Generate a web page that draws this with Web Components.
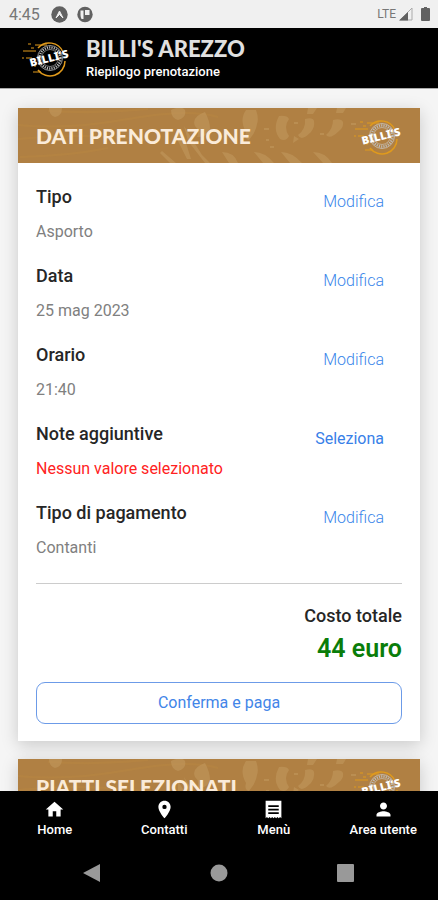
<!DOCTYPE html>
<html lang="it">
<head>
<meta charset="utf-8">
<meta name="viewport" content="width=device-width, initial-scale=1">
<title>Billi's Arezzo - Riepilogo prenotazione</title>
<style>
  html, body {
    margin: 0;
    height: 100%;
    background: #f5f5f5;
    font-family: Roboto, sans-serif;
    color: #262626;
  }
</style>
</head>
<body>
<booking-app></booking-app>

<script>
(() => {
  const define = (name, html, setup) => {
    const template = document.createElement("template");
    template.innerHTML = html;
    customElements.define(name, class extends HTMLElement {
      constructor() {
        super();
        this.attachShadow({ mode: "open" });
        this.shadowRoot.appendChild(template.content.cloneNode(true));
      }
      connectedCallback() {
        if (setup) setup(this, this.shadowRoot);
      }
    });
  };

  define("billis-logo", `
    <style>
      :host { display: block; flex: none; width: 48px; height: 36px; }
      svg { display: block; width: 100%; height: 100%; overflow: visible; }
      text { font-family: "Noto Sans", sans-serif; font-weight: 900; font-size: 11px; fill: #fff; }
    </style>
    <svg viewBox="0 0 48 36" role="img" aria-label="Logo Billi's">
      <g fill="none" stroke="#e09a1c">
        <path d="M16 8A15 15 0 0 1 41 12M43 21A15 15 0 0 1 16 30" stroke-width="1.5"/>
        <path d="M6 4h3M13 5h12M1 11h13M0 18h2M4 18h6M14 26h-2M11 32h8M9 8h3" stroke-width="1.1"/>
      </g>
      <circle cx="28" cy="18" r="10.500" fill="none" stroke="#bbb" stroke-width="2.400" stroke-dasharray="1.200 1.100"/>
      <circle cx="28" cy="18" r="12.500" fill="none" stroke="#ccc" stroke-width=".7"/>
      <circle cx="28" cy="18" r="8.500" fill="none" stroke="#ccc" stroke-width=".6"/>
      <text x="27" y="22" text-anchor="middle" transform="rotate(-14 27 18)">BILLI'S</text>
    </svg>
  `);

  define("status-bar", `
    <style>
      :host {
        display: flex; align-items: center; justify-content: space-between; flex: none;
        height: 28px; padding: 0 8px 0 9px; box-sizing: border-box;
        background: #f0f0f0; color: #777; font-size: 16px;
      }
      div { display: flex; align-items: center; }
      svg { display: block; }
      .left svg { margin-left: 9px; }
      .left span { margin-right: 2px; }
      .right { font-size: 12px; }
      .right svg { margin-left: 3px; }
      .right svg + svg { margin-left: 8px; }
    </style>
    <div class="left">
      <span>4:45</span>
      <svg width="17" height="17" viewBox="0 0 17 17" aria-hidden="true">
        <circle cx="8.500" cy="8.500" r="8.200" fill="#616161"/>
        <path d="M5 12L8.500 5L12 12L8.500 8.500Z" fill="#f0f0f0" stroke="#f0f0f0" stroke-linejoin="round"/>
      </svg>
      <svg width="16" height="17" viewBox="0 0 16 17" aria-hidden="true">
        <circle cx="8" cy="8.500" r="7.700" fill="#616161"/>
        <path d="M3.500 4.500h3V13h-2q-1-2-1-4zM8 4h4.500v5H8z" fill="#f0f0f0"/>
      </svg>
    </div>
    <div class="right">
      <span>LTE</span>
      <svg width="14" height="14" viewBox="0 0 14 14" aria-hidden="true">
        <path d="M13 1V13H1Z" fill="none" stroke="#aaa"/>
        <path d="M9 5V13.500H0Z" fill="#616161"/>
      </svg>
      <svg width="9" height="14" viewBox="0 0 9 14" aria-hidden="true">
        <path d="M3 0h3v1h2q1 0 1 1v11q0 1-1 1H1q-1 0-1-1V2q0-1 1-1h2z" fill="#616161"/>
      </svg>
    </div>
  `);

  define("app-header", `
    <style>
      :host {
        display: flex; align-items: center; flex: none; gap: 16px;
        height: 61px; padding: 0 22px; box-sizing: border-box;
        background: #000; color: #fff; border-bottom: 1px solid #aaa;
      }
      div { padding-top: 4px; }
      ::slotted(h1) { margin: 0; font: 900 22px/24px Lato, sans-serif; color: #e0e0e0; }
      ::slotted(p) { margin: 0; font-size: 13px; line-height: 22px; font-weight: 500; }
    </style>
    <billis-logo></billis-logo>
    <div><slot></slot></div>
  `);

  define("section-card", `
    <style>
      :host { display: block; background: #fff; box-shadow: 0 4px 16px rgba(0, 0, 0, .18); }
      header {
        display: grid; align-items: center; height: 55px;
        background: #b08043; overflow: hidden;
      }
      header > * { grid-area: 1 / 1; }
      .pattern { width: 100%; height: 55px; display: block; }
      .bar { display: flex; align-items: center; justify-content: space-between; padding: 0 18px; }
      .bar ::slotted(h2) { margin: 0; font: 900 21px/24px Lato, sans-serif; color: #faebd9; }
      .body { padding: 22px 18px 17px; }
    </style>
    <header>
      <svg class="pattern" viewBox="0 0 402 55" preserveAspectRatio="xMidYMid slice" aria-hidden="true">
        <g fill="none" stroke="#bd8a43" stroke-width="2" opacity=".35">
          <path d="M0 17Q50 22 110 11T200 9M0 31Q70 24 140 34M2 49Q50 48 90 40M30 3Q80 6 130 1"/>
        </g>
        <g fill="#c39a60" opacity=".55">
          <path d="M31 0h13q0 8-7 9q-6-2-6-9zM153 2q10-5 14 0q2 7-7 10q-7-2-7-10z"/>
          <path d="M187 4q5 9 5 17q-3 9-13 8q3-7-2-11q-4-9 10-14zM228 2h10q3 8 1 14q-1 8-8 16q-5-1-3-8q-7-12 0-22z"/>
          <path d="M261 8q8-1 10 3q-6 8 0 17q-3 6-9 3q-8-10-1-23zM290 0h9l-4 6h-6zM287 11q8-2 9 2q1 6-3 11q-10 10-13 3q8-6 7-16zM319 0h9l-3 5h-7zM315 12q8-2 10 2q1 5-4 9q-9 9-13 4q7-6 7-15z"/>
          <path d="M204 44q12 0 16 11h-9zM236 44q11 0 20 11h-11zM263 44q11 0 21 11h-12zM295 44q12 0 19 11h-9z"/>
          <path d="M160 22l8 13 5 16h-4l-9-18zM166 18l18 29 8 8h-5l-17-22zM144 43l14 12h-6l-10-10z"/>
          <path d="M246 20h5v2h-5zM248 31h3v2h-3zM276 28l5 3-6 4zM302 25h4v2h-4zM333 15h5v2h-5zM252 38h4v2h-4zM276 14h4v2h-4z"/>
        </g>
      </svg>
      <div class="bar"><slot name="title"></slot><billis-logo></billis-logo></div>
    </header>
    <div class="body"><slot></slot></div>
  `);

  define("detail-row", `
    <style>
      :host { display: flex; justify-content: space-between; height: 79px; padding-right: 18px; }
      h3 { margin: 0 0 12px; font-size: 18px; line-height: 24px; font-weight: 500; }
      p { margin: 0; font-size: 16px; line-height: 22px; color: #808080; }
      :host([missing]) p { color: #f22; }
      button {
        align-self: flex-start; margin: 6px 0 0; padding: 0; border: 0; background: none;
        font: 300 16px/22px Roboto, sans-serif; color: #3a86ea; cursor: pointer;
      }
      :host([missing]) button { font-weight: 400; color: #3880e8; }
    </style>
    <div><h3 id="label"></h3><p><slot></slot></p></div>
    <button type="button" aria-describedby="label"></button>
  `, (host, root) => {
    root.querySelector("h3").textContent = host.getAttribute("label");
    root.querySelector("button").textContent = host.getAttribute("action") || "Modifica";
  });

  define("order-total", `
    <style>
      :host { display: block; margin-top: 3px; border-top: 1px solid #ccc; padding-top: 20px; text-align: right; }
      h3 { margin: 0; font-size: 18px; line-height: 24px; font-weight: 500; }
      p { margin: 5px 0 17px; font-size: 25px; line-height: 32px; font-weight: 600; color: #0a7d0a; }
      button {
        display: block; width: 100%; height: 42px; border: 1px solid #6c9be8; border-radius: 9px;
        background: #fff; font: 400 16px/22px Roboto, sans-serif; color: #4285e8; cursor: pointer;
      }
    </style>
    <h3>Costo totale</h3>
    <p><slot></slot></p>
    <button type="button">Conferma e paga</button>
  `);

  const icons = {
    home: "M10 20v-6h4v6h5v-8h3L12 3 2 12h3v8z",
    place: "M12 2C8.130 2 5 5.130 5 9c0 5.250 7 13 7 13s7-7.750 7-13c0-3.870-3.130-7-7-7zm0 9.500a2.500 2.500 0 1 1 0-5 2.500 2.500 0 0 1 0 5z",
    receipt: "M18 17H6v-2h12v2zm0-4H6v-2h12v2zm0-4H6V7h12v2zM3 22l1.500-1.500L6 22l1.500-1.500L9 22l1.500-1.500L12 22l1.500-1.500L15 22l1.500-1.500L18 22l1.500-1.500L21 22V2H3z",
    person: "M12 12c2.210 0 4-1.790 4-4s-1.790-4-4-4-4 1.790-4 4 1.790 4 4 4zm0 2c-2.670 0-8 1.340-8 4v2h16v-2c0-2.660-5.330-4-8-4z"
  };

  define("tab-link", `
    <style>
      :host { display: block; }
      a {
        display: flex; flex-direction: column; align-items: center;
        color: #fff; text-decoration: none; font-size: 13px; line-height: 20px; font-weight: 500;
      }
      svg { width: 21px; height: 21px; fill: currentColor; }
    </style>
    <a href="#"><svg viewBox="0 0 24 24" aria-hidden="true"><path/></svg><slot></slot></a>
  `, (host, root) => {
    root.querySelector("path").setAttribute("d", icons[host.getAttribute("icon")]);
  });

  define("tab-bar", `
    <style>
      :host { display: block; flex: none; background: #000; }
      nav { display: grid; grid-template-columns: repeat(4, 1fr); height: 55px; padding-top: 8px; box-sizing: border-box; }
    </style>
    <nav><slot></slot></nav>
  `);

  define("system-nav", `
    <style>
      :host {
        display: grid; grid-template-columns: repeat(3, 1fr); flex: none;
        height: 54px; padding: 0 29px; background: #000;
      }
      button { display: grid; place-items: center; padding: 0; border: 0; background: none; }
      svg { width: 18px; height: 18px; fill: #999; }
    </style>
    <button type="button" aria-label="Indietro"><svg viewBox="0 0 18 18"><path d="M17 0v18L0 9z"/></svg></button>
    <button type="button" aria-label="Schermata principale"><svg viewBox="0 0 18 18"><circle cx="9" cy="9" r="8.500"/></svg></button>
    <button type="button" aria-label="Recenti"><svg viewBox="0 0 18 18"><rect width="17" height="18" rx="1"/></svg></button>
  `);

  define("booking-app", `
    <style>
      :host { display: flex; flex-direction: column; height: 100vh; }
      main {
        flex: 1; min-height: 0; overflow-y: auto; scrollbar-width: none;
        display: flex; flex-direction: column; gap: 18px; padding: 19px 18px; box-sizing: border-box;
      }
      section-card { flex: none; }
    </style>
    <status-bar></status-bar>
    <app-header>
      <h1>BILLI'S AREZZO</h1>
      <p>Riepilogo prenotazione</p>
    </app-header>
    <main>
      <section-card>
        <h2 slot="title">DATI PRENOTAZIONE</h2>
        <detail-row label="Tipo">Asporto</detail-row>
        <detail-row label="Data">25 mag 2023</detail-row>
        <detail-row label="Orario">21:40</detail-row>
        <detail-row label="Note aggiuntive" action="Seleziona" missing>Nessun valore selezionato</detail-row>
        <detail-row label="Tipo di pagamento">Contanti</detail-row>
        <order-total>44 euro</order-total>
      </section-card>
      <section-card>
        <h2 slot="title">PIATTI SELEZIONATI</h2>
      </section-card>
    </main>
    <tab-bar>
      <tab-link icon="home">Home</tab-link>
      <tab-link icon="place">Contatti</tab-link>
      <tab-link icon="receipt">Menù</tab-link>
      <tab-link icon="person">Area utente</tab-link>
    </tab-bar>
    <system-nav></system-nav>
  `);
})();
</script>
</body>
</html>
